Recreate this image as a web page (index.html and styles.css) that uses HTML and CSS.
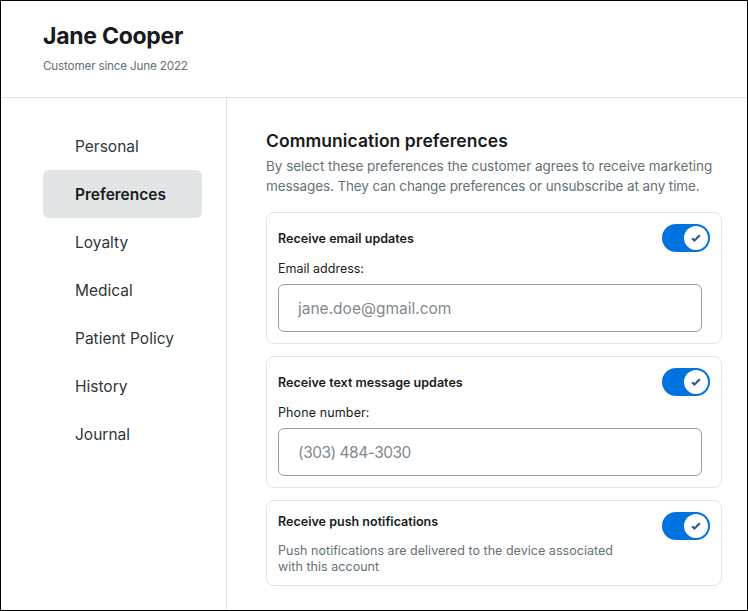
FILE: index.html
```html
<!DOCTYPE html>
<html lang="en">
<head>
<meta charset="utf-8">
<title>Jane Cooper</title>
<link rel="stylesheet" href="styles.css">
</head>
<body>
<div class="page">
  <header class="header">
    <h1>Jane Cooper</h1>
    <p>Customer since June 2022</p>
  </header>
  <div class="body">
    <nav class="nav">
      <a>Personal</a>
      <a class="active">Preferences</a>
      <a>Loyalty</a>
      <a>Medical</a>
      <a>Patient Policy</a>
      <a>History</a>
      <a>Journal</a>
    </nav>
    <main class="main">
      <h2>Communication preferences</h2>
      <p class="intro">By select these preferences the customer agrees to receive marketing<br><span class="tight">messages. They can change preferences or unsubscribe at any time.</span></p>
      <section class="card">
        <div class="row"><h3>Receive email updates</h3><span class="toggle"><span class="knob"><svg viewBox="0 0 24 24"><path d="M8.1 12.2l2.3 2.3 5.5-5.2"/></svg></span></span></div>
        <label>Email address:</label>
        <div class="field">jane.doe@gmail.com</div>
      </section>
      <section class="card">
        <div class="row"><h3>Receive text message updates</h3><span class="toggle"><span class="knob"><svg viewBox="0 0 24 24"><path d="M8.1 12.2l2.3 2.3 5.5-5.2"/></svg></span></span></div>
        <label class="loose">Phone number:</label>
        <div class="field phone">(303) 484-3030</div>
      </section>
      <section class="card push">
        <div class="row"><h3>Receive push notifications</h3><span class="toggle"><span class="knob"><svg viewBox="0 0 24 24"><path d="M8.1 12.2l2.3 2.3 5.5-5.2"/></svg></span></span></div>
        <p class="note">Push notifications are delivered to the device associated<br>with this account</p>
      </section>
    </main>
  </div>
</div>
</body>
</html>
```
FILE: styles.css
```css
* { box-sizing: border-box; }
body { margin: 0; font-family: Inter, "Liberation Sans", sans-serif; color: #181b1e; }
h1, h2, h3, p { margin: 0; }
.page { width: 748px; height: 611px; border: 1px solid #000; background: #fff; display: flex; flex-direction: column; overflow: hidden; }
.header { height: 97px; border-bottom: 1px solid #e1e4e4; padding: 20px 42px 0; }
h1 { font-size: 23px; line-height: 30px; font-weight: 700; letter-spacing: -.27px; }
.header p { margin-top: 7px; font-size: 11.7px; line-height: 16px; color: #667176; letter-spacing: -.18px; }
.body { display: flex; flex: 1; }
.nav { width: 226px; padding: 24px 24px 0 42px; border-right: 1px solid #e1e4e4; font-size: 15.5px; color: #303638; }
.nav a { display: block; height: 48px; line-height: 49px; padding-left: 32px; border-radius: 6px; white-space: nowrap; }
.nav .active { background: #e1e5e5; color: #181b1e; font-weight: 600; }
.main { width: 495px; padding: 31px 0 0 39px; white-space: nowrap; }
h2 { font-size: 17.5px; line-height: 24px; font-weight: 600; letter-spacing: .06px; }
.intro { margin-top: 3px; font-size: 13.5px; line-height: 20px; color: #667176; letter-spacing: -.02px; }
.tight { letter-spacing: -.11px; }
.card { width: 456px; height: 132px; margin-top: 12px; border: 1px solid #e3e5e5; border-radius: 8px; padding: 11px; }
.intro + .card { margin-top: 16px; }
.row { display: flex; justify-content: space-between; height: 28px; }
h3 { font-size: 12.5px; line-height: 30px; font-weight: 600; letter-spacing: .02px; }
label { display: block; margin-top: 8px; font-size: 12.5px; line-height: 18px; }
.loose { letter-spacing: .12px; }
.field { width: 424px; height: 48px; margin-top: 6px; padding-left: 19px; border: 1px solid #999fa2; border-radius: 6px; font-size: 15.5px; line-height: 48px; color: #81898d; }
.phone { letter-spacing: -.5px; }
.push { height: 86px; }
.push h3 { line-height: 20px; }
.note { margin-top: 3px; font-size: 12.5px; line-height: 16px; color: #667176; letter-spacing: .035px; }
.toggle { width: 48px; height: 28px; padding: 2px; border-radius: 14px; background: #0073df; display: flex; justify-content: flex-end; }
.knob { width: 24px; height: 24px; border-radius: 50%; background: #fff; }
svg { display: block; width: 24px; height: 24px; fill: none; stroke: #365778; stroke-width: 2.1; }
```
